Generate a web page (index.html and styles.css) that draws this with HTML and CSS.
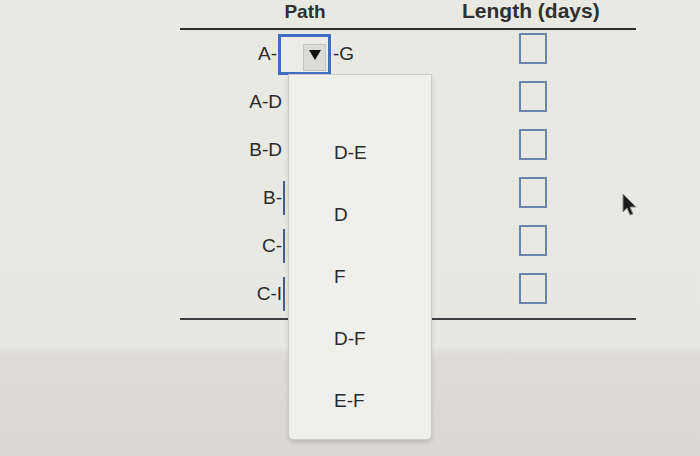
FILE: index.html
```html
<!DOCTYPE html>
<html lang="en">
<head>
    <meta charset="UTF-8">
    <title>Path lengths</title>
    <link rel="stylesheet" href="styles.css">
</head>
<body>
    <div class="sheet">
        <div class="paths">
            <div class="head">
                <div class="head-cell">Path</div>
                <div class="head-cell">Length (days)</div>
            </div>

            <div class="row">
                <div class="path-cell">
                    <span class="label short">A-</span>
                    <div class="select open">
                        <span class="arrow">
                            <svg width="14" height="12" viewBox="0 0 14 12"><polygon points="1,1 13,1 7,11" fill="#111"/></svg>
                        </span>
                    </div>
                    <span class="tail">-G</span>
                </div>
                <div class="len-cell"><input type="text" class="len"></div>
            </div>

            <div class="row">
                <div class="path-cell">
                    <span class="label">A-D</span>
                    <div class="select hidden"></div>
                </div>
                <div class="len-cell"><input type="text" class="len"></div>
            </div>

            <div class="row">
                <div class="path-cell">
                    <span class="label">B-D</span>
                    <div class="select hidden"></div>
                </div>
                <div class="len-cell"><input type="text" class="len"></div>
            </div>

            <div class="row">
                <div class="path-cell">
                    <span class="label">B-</span>
                    <div class="select"></div>
                </div>
                <div class="len-cell"><input type="text" class="len"></div>
            </div>

            <div class="row">
                <div class="path-cell">
                    <span class="label">C-</span>
                    <div class="select"></div>
                </div>
                <div class="len-cell"><input type="text" class="len"></div>
            </div>

            <div class="row">
                <div class="path-cell">
                    <span class="label">C-I</span>
                    <div class="select"></div>
                </div>
                <div class="len-cell"><input type="text" class="len"></div>
            </div>
        </div>

        <!-- open dropdown of the first select -->
        <ul class="menu">
            <li>D-E</li>
            <li>D</li>
            <li>F</li>
            <li>D-F</li>
            <li>E-F</li>
        </ul>

        <svg class="cursor" width="18" height="24" viewBox="0 0 18 24">
            <path d="M2 1 L2 19 L6 15 L9 22 L12 21 L9 14 L15 14 Z" fill="#1c1c1c" stroke="#8a8a86" stroke-width="1"/>
        </svg>
    </div>
</body>
</html>
```

FILE: styles.css
```css
body {
    margin: 0;
    font-family: "Liberation Sans", Arial, sans-serif;
    background: linear-gradient(to bottom, #e9e9e4 0, #e8e8e3 346px, #dcdbd5 354px, #d9d8d2 100%);
    color: #222;
}

.sheet {
    position: relative;
    width: 700px;
    height: 456px;
    overflow: hidden;
}

.paths {
    margin-left: 180px;
    width: 456px;
    border-bottom: 2px solid #3e3e3e;
}

.head {
    display: grid;
    grid-template-columns: 250px 206px;
    height: 28px;
    border-bottom: 2px solid #2e2e2e;
}

.head-cell {
    text-align: center;
    font-weight: bold;
    font-size: 19px;
    line-height: 24px;
    color: #303030;
}

.head-cell:last-child {
    text-align: left;
    padding-left: 32px;
    font-size: 21px;
    line-height: 22px;
    white-space: nowrap;
}

.row {
    display: grid;
    grid-template-columns: 250px 206px;
    height: 48px;
}

.path-cell {
    display: flex;
    align-items: center;
}

.label {
    width: 102px;
    text-align: right;
    font-size: 19px;
    color: #2a2a2a;
}

.label.short {
    width: 97px;
}

.tail {
    font-size: 19px;
    color: #2a2a2a;
    margin-left: 2px;
}

.select {
    width: 48px;
    height: 34px;
    margin-left: 1px;
    border-left: 2px solid #4a5a86;
    display: flex;
    align-items: center;
    justify-content: flex-end;
    box-sizing: border-box;
}

.select.hidden {
    border-left-color: transparent;
}

.select.open {
    width: 53px;
    height: 41px;
    margin-left: 1px;
    border: 3px solid #3f6dc2;
    padding-right: 2px;
    background: #ecece7;
}

.arrow {
    width: 23px;
    height: 27px;
    margin-top: 6px;
    background: #dcdcd7;
    border: 1px solid #c4c4c0;
    display: flex;
    align-items: center;
    justify-content: center;
    padding-bottom: 4px;
    box-sizing: border-box;
}

.len-cell {
    display: flex;
    align-items: flex-start;
    padding-top: 3px;
    padding-left: 89px;
}

.len {
    width: 28px;
    height: 31px;
    border: 2px solid #6a86ad;
    background: transparent;
    box-sizing: border-box;
    padding: 0;
}

.menu {
    position: absolute;
    left: 288px;
    top: 74px;
    width: 144px;
    height: 366px;
    margin: 0;
    padding: 47px 0 0 45px;
    list-style: none;
    background: #efefeb;
    border: 1px solid #cbcbc6;
    border-radius: 0 0 5px 5px;
    box-shadow: 0 3px 4px rgba(0, 0, 0, 0.12);
    box-sizing: border-box;
}

.menu li {
    height: 62px;
    line-height: 62px;
    font-size: 19px;
    color: #2a2a2a;
}

.cursor {
    position: absolute;
    left: 621px;
    top: 193px;
}
```
